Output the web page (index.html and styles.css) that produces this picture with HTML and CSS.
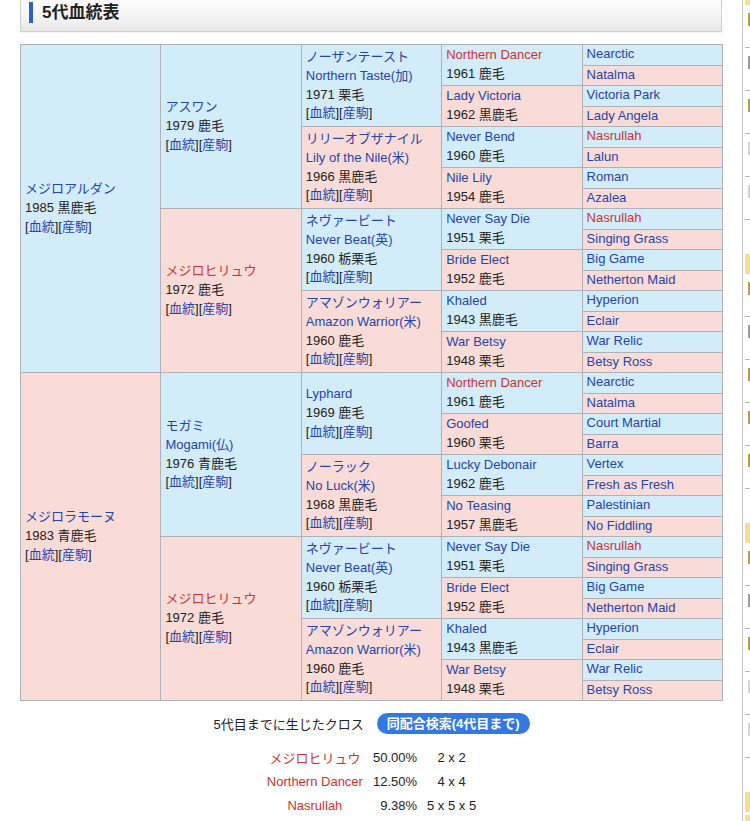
FILE: index.html
```html
<!DOCTYPE html>
<html lang="ja">
<head>
<meta charset="utf-8">
<title>5代血統表</title>
<link rel="stylesheet" href="styles.css">
</head>
<body>
<div class="page">
  <div class="main">
    <div class="hd"><h2 class="hd-title">5代血統表</h2></div>

    <div class="ped">
      <!-- row 1 -->
      <div class="c g1 m"><a>メジロアルダン</a><span>1985 黒鹿毛</span><span>[<a>血統</a>][<a>産駒</a>]</span></div>
      <div class="c g2 m"><a>アスワン</a><span>1979 鹿毛</span><span>[<a>血統</a>][<a>産駒</a>]</span></div>
      <div class="c g3 m"><a>ノーザンテースト</a><a>Northern Taste(加)</a><span>1971 栗毛</span><span>[<a>血統</a>][<a>産駒</a>]</span></div>
      <div class="c g4 m"><a class="x">Northern Dancer</a><span>1961 鹿毛</span></div>
      <div class="c g5 m"><a>Nearctic</a></div>
      <div class="c g5 f"><a>Natalma</a></div>
      <div class="c g4 f"><a>Lady Victoria</a><span>1962 黒鹿毛</span></div>
      <div class="c g5 m"><a>Victoria Park</a></div>
      <div class="c g5 f"><a>Lady Angela</a></div>
      <!-- row 5 -->
      <div class="c g3 f"><a>リリーオブザナイル</a><a>Lily of the Nile(米)</a><span>1966 黒鹿毛</span><span>[<a>血統</a>][<a>産駒</a>]</span></div>
      <div class="c g4 m"><a>Never Bend</a><span>1960 鹿毛</span></div>
      <div class="c g5 m"><a class="x">Nasrullah</a></div>
      <div class="c g5 f"><a>Lalun</a></div>
      <div class="c g4 f"><a>Nile Lily</a><span>1954 鹿毛</span></div>
      <div class="c g5 m"><a>Roman</a></div>
      <div class="c g5 f"><a>Azalea</a></div>
      <!-- row 9 -->
      <div class="c g2 f"><a class="x">メジロヒリュウ</a><span>1972 鹿毛</span><span>[<a>血統</a>][<a>産駒</a>]</span></div>
      <div class="c g3 m"><a>ネヴァービート</a><a>Never Beat(英)</a><span>1960 栃栗毛</span><span>[<a>血統</a>][<a>産駒</a>]</span></div>
      <div class="c g4 m"><a>Never Say Die</a><span>1951 栗毛</span></div>
      <div class="c g5 m"><a class="x">Nasrullah</a></div>
      <div class="c g5 f"><a>Singing Grass</a></div>
      <div class="c g4 f"><a>Bride Elect</a><span>1952 鹿毛</span></div>
      <div class="c g5 m"><a>Big Game</a></div>
      <div class="c g5 f"><a>Netherton Maid</a></div>
      <!-- row 13 -->
      <div class="c g3 f"><a>アマゾンウォリアー</a><a>Amazon Warrior(米)</a><span>1960 鹿毛</span><span>[<a>血統</a>][<a>産駒</a>]</span></div>
      <div class="c g4 m"><a>Khaled</a><span>1943 黒鹿毛</span></div>
      <div class="c g5 m"><a>Hyperion</a></div>
      <div class="c g5 f"><a>Eclair</a></div>
      <div class="c g4 f"><a>War Betsy</a><span>1948 栗毛</span></div>
      <div class="c g5 m"><a>War Relic</a></div>
      <div class="c g5 f"><a>Betsy Ross</a></div>
      <!-- row 17 -->
      <div class="c g1 f"><a>メジロラモーヌ</a><span>1983 青鹿毛</span><span>[<a>血統</a>][<a>産駒</a>]</span></div>
      <div class="c g2 m"><a>モガミ</a><a>Mogami(仏)</a><span>1976 青鹿毛</span><span>[<a>血統</a>][<a>産駒</a>]</span></div>
      <div class="c g3 m"><a>Lyphard</a><span>1969 鹿毛</span><span>[<a>血統</a>][<a>産駒</a>]</span></div>
      <div class="c g4 m"><a class="x">Northern Dancer</a><span>1961 鹿毛</span></div>
      <div class="c g5 m"><a>Nearctic</a></div>
      <div class="c g5 f"><a>Natalma</a></div>
      <div class="c g4 f"><a>Goofed</a><span>1960 栗毛</span></div>
      <div class="c g5 m"><a>Court Martial</a></div>
      <div class="c g5 f"><a>Barra</a></div>
      <!-- row 21 -->
      <div class="c g3 f"><a>ノーラック</a><a>No Luck(米)</a><span>1968 黒鹿毛</span><span>[<a>血統</a>][<a>産駒</a>]</span></div>
      <div class="c g4 m"><a>Lucky Debonair</a><span>1962 鹿毛</span></div>
      <div class="c g5 m"><a>Vertex</a></div>
      <div class="c g5 f"><a>Fresh as Fresh</a></div>
      <div class="c g4 f"><a>No Teasing</a><span>1957 黒鹿毛</span></div>
      <div class="c g5 m"><a>Palestinian</a></div>
      <div class="c g5 f"><a>No Fiddling</a></div>
      <!-- row 25 -->
      <div class="c g2 f"><a class="x">メジロヒリュウ</a><span>1972 鹿毛</span><span>[<a>血統</a>][<a>産駒</a>]</span></div>
      <div class="c g3 m"><a>ネヴァービート</a><a>Never Beat(英)</a><span>1960 栃栗毛</span><span>[<a>血統</a>][<a>産駒</a>]</span></div>
      <div class="c g4 m"><a>Never Say Die</a><span>1951 栗毛</span></div>
      <div class="c g5 m"><a class="x">Nasrullah</a></div>
      <div class="c g5 f"><a>Singing Grass</a></div>
      <div class="c g4 f"><a>Bride Elect</a><span>1952 鹿毛</span></div>
      <div class="c g5 m"><a>Big Game</a></div>
      <div class="c g5 f"><a>Netherton Maid</a></div>
      <!-- row 29 -->
      <div class="c g3 f"><a>アマゾンウォリアー</a><a>Amazon Warrior(米)</a><span>1960 鹿毛</span><span>[<a>血統</a>][<a>産駒</a>]</span></div>
      <div class="c g4 m"><a>Khaled</a><span>1943 黒鹿毛</span></div>
      <div class="c g5 m"><a>Hyperion</a></div>
      <div class="c g5 f"><a>Eclair</a></div>
      <div class="c g4 f"><a>War Betsy</a><span>1948 栗毛</span></div>
      <div class="c g5 m"><a>War Relic</a></div>
      <div class="c g5 f"><a>Betsy Ross</a></div>
    </div>

    <div class="cross-head">
      <span class="cross-label">5代目までに生じたクロス</span>
      <span class="btn">同配合検索(4代目まで)</span>
    </div>
    <table class="cross">
      <tr><td class="cn">メジロヒリュウ</td><td class="cp">50.00%</td><td class="cx">2 x 2</td></tr>
      <tr><td class="cn">Northern Dancer</td><td class="cp">12.50%</td><td class="cx">4 x 4</td></tr>
      <tr><td class="cn">Nasrullah</td><td class="cp">9.38%</td><td class="cx">5 x 5 x 5</td></tr>
    </table>
  </div>

  <div class="side">
    <div class="sb-top"></div>
    <div class="sb-item"><i class="t olive"></i></div>
    <div class="sb-item"><i class="t gray"></i></div>
    <div class="sb-item"><i class="t olive"></i></div>
    <div class="sb-item"><i class="t light"></i></div>
    <div class="sb-item"><i class="t light"></i></div>
    <div class="sb-sec"></div>
    <div class="sb-item"><i class="t olive"></i></div>
    <div class="sb-item"><i class="t gray"></i></div>
    <div class="sb-item"><i class="t olive"></i></div>
    <div class="sb-item"><i class="t olive"></i></div>
    <div class="sb-item"><i class="t olive"></i></div>
    <div class="sb-sec"></div>
    <div class="sb-item"><i class="t olive"></i></div>
    <div class="sb-item"><i class="t gray"></i></div>
    <div class="sb-item"><i class="t olive"></i></div>
    <div class="sb-item"><i class="t light"></i></div>
    <div class="sb-item"><i class="t light"></i></div>
    <div class="sb-sec"></div>
    <div class="sb-top2"></div>
  </div>
</div>
</body>
</html>
```

FILE: styles.css
```css
html, body {
  margin: 0;
  padding: 0;
  background: #fff;
}

body {
  font-family: "Liberation Sans", Arial, "Noto Sans CJK JP", sans-serif;
  font-size: 13px;
  color: #222;
}

.page {
  display: flex;
  height: 821px;
  overflow: hidden;
}

.main {
  width: 703px;
  margin-left: 20px;
  flex: none;
}

/* header */
.hd {
  margin-top: -3px;
  height: 35px;
  width: 702px;
  box-sizing: border-box;
  border: 1px solid #cfcfcf;
  background: linear-gradient(#ffffff, #f7f7f7 40%, #e9e9e9);
  padding: 4px 8px 0;
  box-shadow: 0 1px 1px rgba(0,0,0,0.04);
}

.hd-title {
  margin: 0;
  border-left: 4px solid #2f5fcf;
  padding-left: 9px;
  font-size: 17px;
  line-height: 21px;
  font-weight: bold;
  color: #222;
}

/* pedigree grid */
.ped {
  margin-top: 12px;
  display: grid;
  grid-template-columns: repeat(5, 1fr);
  grid-template-rows: repeat(32, 1fr);
  height: 657px;
  box-sizing: border-box;
  gap: 1px;
  background: #aeb1b5;
  border: 1px solid #aeb1b5;
}

.c {
  display: flex;
  flex-direction: column;
  justify-content: center;
  padding: 0 4px;
  line-height: 18.7px;
  white-space: nowrap;
  overflow: hidden;
  min-width: 0;
}

.c a {
  color: #2444ae;
  text-decoration: none;
}

.c a.x {
  color: #d0332e;
}

.m { background: #d3ecfa; }
.f { background: #f9dcd7; }

.g1 { grid-column: 1; grid-row: span 16; }
.g2 { grid-column: 2; grid-row: span 8; }
.g3 { grid-column: 3; grid-row: span 4; }
.g4 { grid-column: 4; grid-row: span 2; }
.g5 { grid-column: 5; grid-row: span 1; }

/* crosses */
.cross-head {
  margin-top: 11px;
  height: 22px;
  display: flex;
  justify-content: center;
  align-items: center;
  gap: 13px;
}

.btn {
  display: inline-block;
  height: 21px;
  line-height: 21px;
  padding: 0 10px;
  border-radius: 11px;
  background: #3379e4;
  color: #fff;
  font-weight: bold;
  font-size: 13px;
}

.cross {
  margin: 11px auto 0;
  border-collapse: collapse;
}

.cross td {
  height: 24px;
  padding: 0 5px;
  white-space: nowrap;
}

.cn {
  text-align: center;
  color: #d0332e;
}

.cp { text-align: right; }
.cx { text-align: center; }

/* cropped sidebar */
.side {
  margin-left: 19px;
  border-left: 1px solid #c6c6c6;
  padding-left: 2px;
  flex: 1;
}

.sb-top {
  height: 5px;
  background: #f7e08a;
}

.sb-top2 {
  height: 20px;
  margin-top: 3px;
  background: #f7e08a;
}

.sb-sec {
  height: 20px;
  margin-top: 34px;
  background: #f7e08a;
  margin-bottom: 0;
}

.sb-item {
  height: 42px;
  border-bottom: 1px dashed #b9b9b9;
  display: flex;
  justify-content: flex-end;
  align-items: flex-start;
  box-sizing: content-box;
}

.t {
  display: block;
  width: 2px;
  height: 13px;
  margin-top: 8px;
}

.t.olive { background: #b9a23c; }
.t.gray { background: #9d9d9d; }
.t.light { background: #d4d4d4; }
```
